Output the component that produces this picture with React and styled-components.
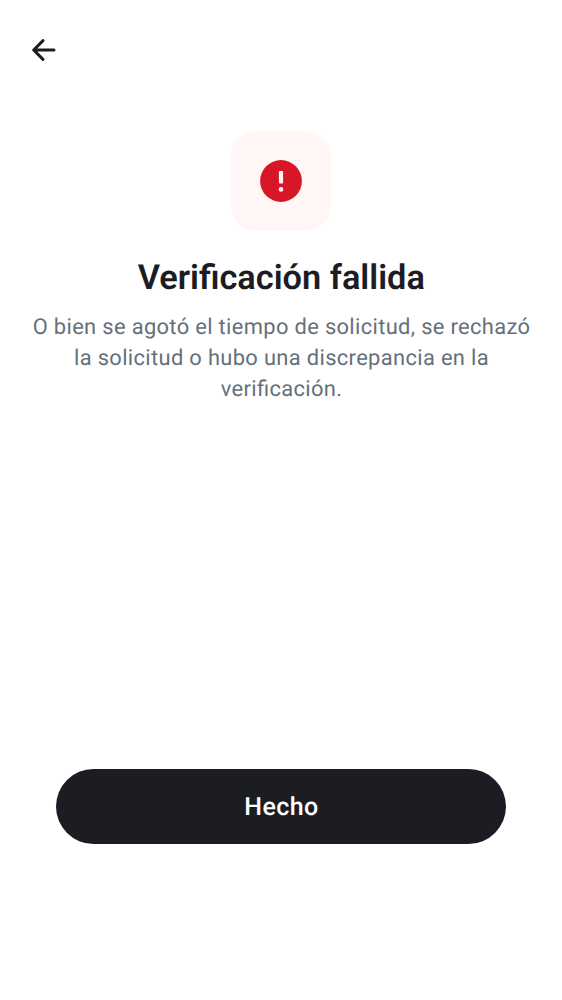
import React from 'react';
import styled, { createGlobalStyle } from 'styled-components';

const GlobalStyle = createGlobalStyle`
  * { box-sizing: border-box; }
  body { margin: 0; background: #fff; }
`;

const Screen = styled.main`
  display: flex;
  flex-direction: column;
  align-items: center;
  width: 100%;
  height: 1000px;
  background: #fff;
  font-family: Roboto, sans-serif;
  text-align: center;
  text-rendering: geometricPrecision;
`;

const TopBar = styled.header`
  display: flex;
  align-items: center;
  width: 100%;
  height: 100px;
  padding-left: 25px;
`;

const BackButton = styled.button`
  display: flex;
  padding: 0;
  border: 0;
  background: none;
  color: #1c1d22;
`;

const Content = styled.section`
  display: flex;
  flex: 1;
  flex-direction: column;
  align-items: center;
  width: 100%;
  padding: 31px 25px 0;
`;

const StatusTile = styled.div`
  display: flex;
  align-items: center;
  justify-content: center;
  width: 100px;
  height: 100px;
  border-radius: 25px;
  background: #fff6f5;
`;

const Title = styled.h1`
  margin: 26px 0 0;
  padding-left: 0.5px;
  color: #1c1d22;
  font-size: 34.35px;
  font-weight: 600;
  line-height: 43px;
`;

const Description = styled.p`
  margin: 12px 0 0;
  padding-left: 1px;
  color: #65707b;
  font-size: 21.9px;
  font-feature-settings: "liga" 1;
  letter-spacing: 0.34px;
  line-height: 31.2px;
`;

const Footer = styled.footer`
  width: 100%;
  padding: 0 56px 156px;
`;

const DoneButton = styled.button`
  width: 100%;
  height: 75px;
  padding: 2px 0 0 1px;
  border: 0;
  border-radius: 38px;
  background: #1c1d22;
  color: #fff;
  font: 500 25px/36px Roboto, sans-serif;
  letter-spacing: 0.4px;
  text-rendering: geometricPrecision;
`;

export default function App() {
  return (
    <Screen>
      <GlobalStyle />
      <TopBar>
        <BackButton aria-label="Atrás">
          <svg width="38" height="38" viewBox="0 0 38 38" fill="none" stroke="currentColor" strokeWidth="3" strokeLinecap="round" strokeLinejoin="round">
            <path d="M29 19H8.7M18 9.6L8.7 19L18 28.4" />
          </svg>
        </BackButton>
      </TopBar>
      <Content>
        <StatusTile>
          <svg width="42" height="42" viewBox="0 0 42 42">
            <circle cx="21" cy="21" r="20.9" fill="#d71728" />
            <rect x="18.9" y="11" width="4.2" height="12.4" rx="1" fill="#fff6f5" />
            <circle cx="21" cy="29.4" r="2.3" fill="#fff6f5" />
          </svg>
        </StatusTile>
        <Title>Verificación fallida</Title>
        <Description>
          O bien se agotó el tiempo de solicitud, se rechazó la solicitud o hubo una discrepancia en la verificación.
        </Description>
      </Content>
      <Footer>
        <DoneButton>Hecho</DoneButton>
      </Footer>
    </Screen>
  );
}
